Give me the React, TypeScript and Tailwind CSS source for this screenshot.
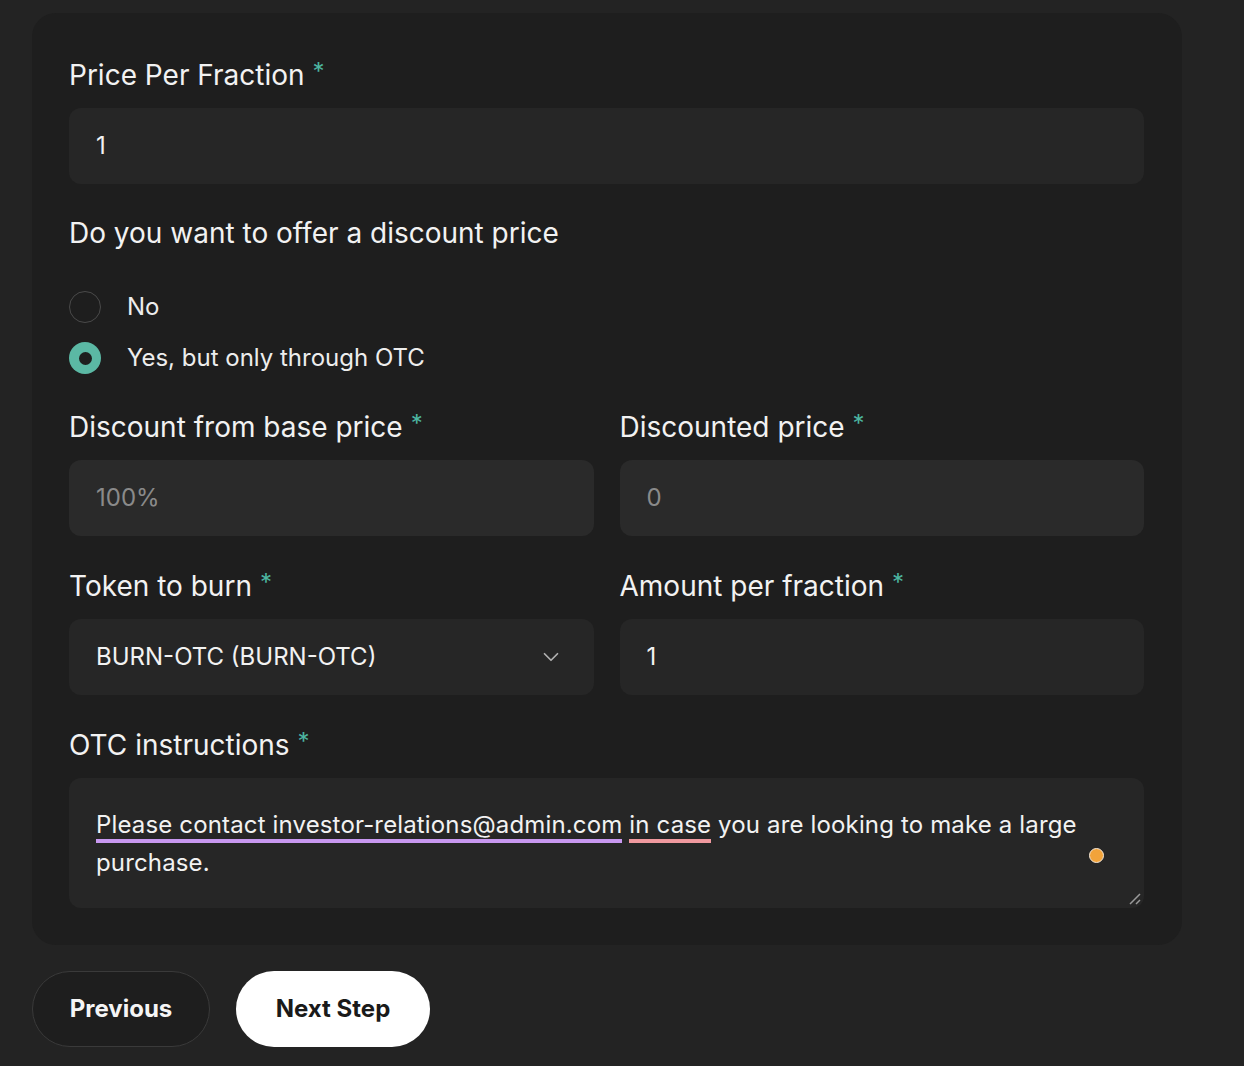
import { ChevronDown } from 'lucide-react'

const font = { fontFamily: 'Inter, "Noto Sans", sans-serif' }

function Label({ text }: { text: string }) {
  return (
    <label className="block text-[28px] leading-[34px] text-[#f2f2f2] pt-[2px] mb-[16px]">
      {text}
      <span className="ml-[8px] text-[#4cb5a0] text-[24px] leading-[24px] relative -top-[5px]">*</span>
    </label>
  )
}

function Field({ value, muted }: { value: string; muted?: boolean }) {
  return (
    <div
      className={`h-[76px] rounded-[12px] px-[27px] flex items-center text-[24px] ${
        muted ? 'bg-[#2a2a2a] text-[#8a8a8a]' : 'bg-[#262626] text-[#f2f2f2]'
      }`}
    >
      {value}
    </div>
  )
}

function Radio({ checked, label }: { checked?: boolean; label: string }) {
  return (
    <div className="flex items-center gap-[26px] h-[34px]">
      {checked ? (
        <span className="w-[32px] h-[32px] rounded-full bg-[#5bb8a4] flex items-center justify-center">
          <span className="w-[13px] h-[13px] rounded-full bg-[#1e1e1e]" />
        </span>
      ) : (
        <span className="w-[32px] h-[32px] rounded-full border border-[#4a4a4a]" />
      )}
      <span className="text-[24px] text-[#ededed]">{label}</span>
    </div>
  )
}

export default function App() {
  return (
    <div className="min-h-[1066px] bg-[#232323] pt-[13px] px-[32px]" style={font}>
      <div className="w-[1150px] bg-[#1e1e1e] rounded-[24px] pl-[37px] pr-[38px] pt-[43px] pb-[37px]">
        {/* ── Price ── */}
        <Label text="Price Per Fraction" />
        <Field value="1" />

        {/* ── Discount choice ── */}
        <p className="mt-[32px] text-[28px] leading-[34px] text-[#f2f2f2]">
          Do you want to offer a discount price
        </p>
        <div className="mt-[40px] flex flex-col gap-[17px]">
          <Radio label="No" />
          <Radio checked label="Yes, but only through OTC" />
        </div>

        <div className="mt-[33px] grid grid-cols-2 gap-x-[26px]">
          <div>
            <Label text="Discount from base price" />
            <Field value="100%" muted />
          </div>
          <div>
            <Label text="Discounted price" />
            <Field value="0" muted />
          </div>
        </div>

        <div className="mt-[31px] grid grid-cols-2 gap-x-[26px]">
          <div>
            <Label text="Token to burn" />
            <div className="h-[76px] rounded-[12px] bg-[#262626] pl-[27px] pr-[30px] flex items-center justify-between text-[24px] text-[#f2f2f2]">
              <span>BURN-OTC (BURN-OTC)</span>
              <ChevronDown size={26} strokeWidth={1.6} className="text-[#b0b0b0]" />
            </div>
          </div>
          <div>
            <Label text="Amount per fraction" />
            <Field value="1" />
          </div>
        </div>

        {/* ── OTC instructions ── */}
        <div className="mt-[31px]">
          <Label text="OTC instructions" />
          <div className="relative h-[130px] rounded-[12px] bg-[#262626] px-[27px] pt-[28px] text-[24px] leading-[38px] tracking-[0.15px] text-[#f2f2f2]">
            <p className="pr-[40px]">
              <span className="border-b-[4px] border-[#c898f0]">
                Please contact investor-relations@admin.com
              </span>{' '}
              <span className="border-b-[4px] border-[#f0999f]">in case</span> you are looking to
              make a large purchase.
            </p>
            <span className="absolute right-[40px] top-[70px] w-[15px] h-[15px] rounded-full bg-[#f2a33a] border border-[#f5e8d8]" />
            <svg
              className="absolute right-[2px] bottom-[2px]"
              width="14"
              height="14"
              viewBox="0 0 14 14"
            >
              <path d="M2 12 L12 2 M8 12 L12 8" stroke="#9a9a9a" strokeWidth="1.5" />
            </svg>
          </div>
        </div>
      </div>

      {/* ── Navigation ── */}
      <div className="mt-[26px] flex gap-[26px]">
        <button className="h-[76px] w-[178px] rounded-full border border-[#3a3a3a] bg-[#1e1e1e] text-[24px] font-bold text-[#f5f5f5]">
          Previous
        </button>
        <button className="h-[76px] w-[194px] rounded-full bg-white text-[24px] font-bold text-[#1a1a1a]">
          Next Step
        </button>
      </div>
    </div>
  )
}
